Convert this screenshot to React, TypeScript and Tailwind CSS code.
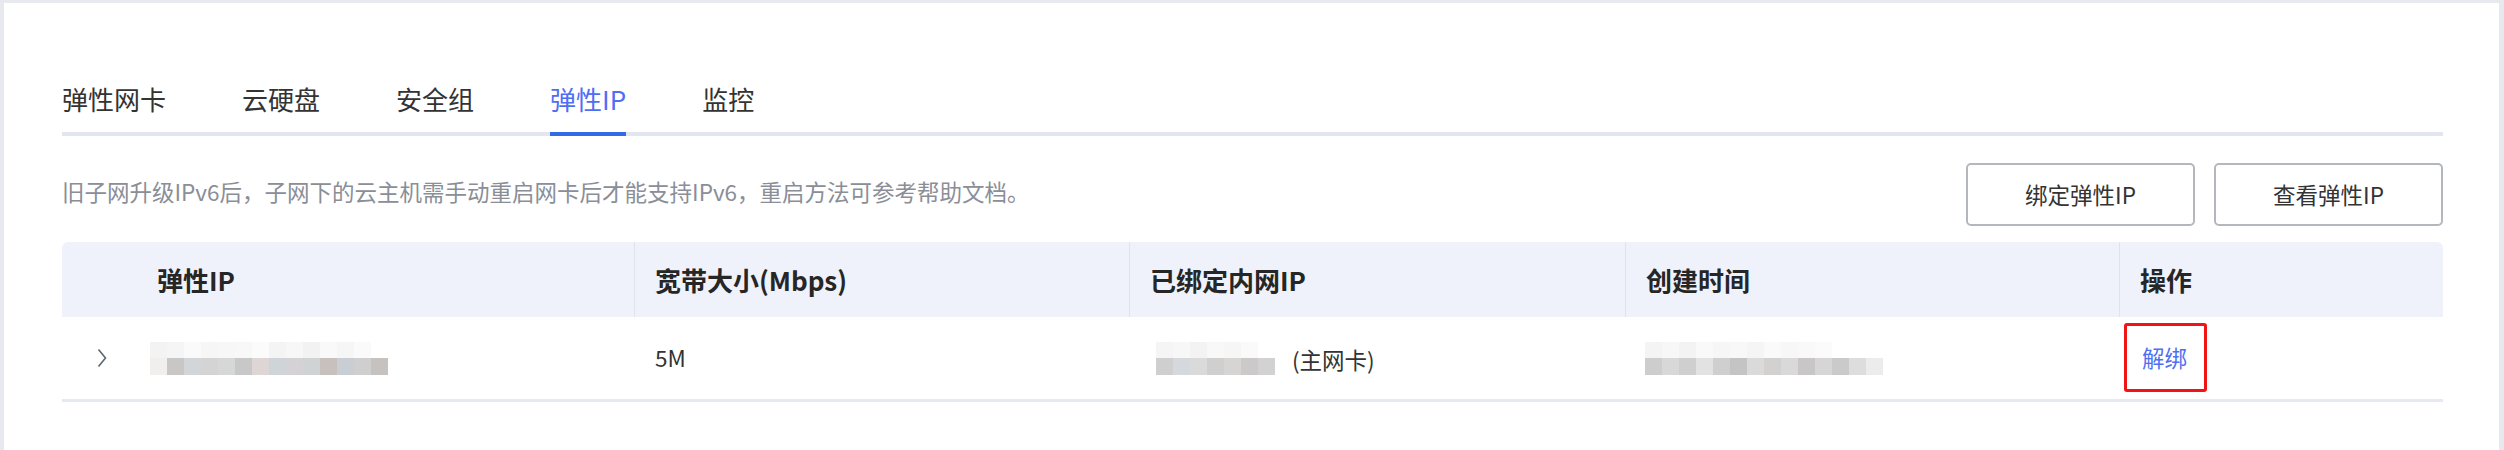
const tabs = ['弹性网卡', '云硬盘', '安全组', '弹性IP', '监控']

const ipTop = ['#f3f3f3', '#f5f5f5', '#fafafa', '#f6f6f6', '#f7f7f7', '#f8f8f8', '#fbfbfb', '#f4f4f4', '#f7f7f7', '#f2f2f2', '#f9f9f9', '#f6f6f6', '#fafafa', '#ffffff']
const ipBottom = ['#f0efee', '#c9c7c5', '#d3d6d8', '#d4d4d4', '#d6d8d8', '#c8c8c8', '#ddd6d4', '#cfd4d9', '#d4d2d4', '#cfd3d3', '#c8c0bc', '#c9cdd4', '#d0cfcf', '#c6c2bf']
const innerTop = ['#f5f5f5', '#f7f7f7', '#f3f3f3', '#f8f8f8', '#f6f6f6', '#fafafa', '#ffffff']
const innerBottom = ['#cfcfd0', '#d5d8dc', '#dadada', '#cfcfcf', '#d7d4d4', '#cbc9ca', '#d2d2d2']
const timeTop = ['#f4f4f4', '#f7f7f7', '#f3f3f3', '#f9f9f9', '#f6f6f6', '#f8f8f8', '#f5f5f5', '#fafafa', '#f7f7f7', '#f9f9f9', '#fbfbfb', '#ffffff', '#ffffff', '#ffffff']
const timeBottom = ['#cdcdcd', '#d8d8d8', '#d0cfcf', '#e2e2e2', '#cfcfcf', '#c4c4c4', '#dadada', '#d3d0d0', '#d9d9d9', '#c8c6c7', '#d6d6d6', '#cacaca', '#dddddd', '#ececec']

// blurred value, drawn as a two-row mosaic
function Mosaic({ top, bottom }: { top: string[]; bottom: string[] }) {
  return (
    <div className="flex flex-col">
      <div className="flex h-[16px]">
        {top.map((c, i) => (
          <div key={i} className="w-[17px] h-full" style={{ backgroundColor: c }} />
        ))}
      </div>
      <div className="flex h-[17px]">
        {bottom.map((c, i) => (
          <div key={i} className="w-[17px] h-full" style={{ backgroundColor: c }} />
        ))}
      </div>
    </div>
  )
}

export default function App() {
  return (
    <div
      className="w-[2504px] h-[450px] bg-[#e8e9ee] pt-[3px] pl-[4px] pr-[5px] overflow-hidden"
      style={{ fontFamily: '"Noto Sans CJK SC", "Noto Sans", sans-serif' }}
    >
      <div className="bg-white h-full pl-[58px] pr-[56px] pt-[78px]">
        {/* tabs */}
        <div className="flex gap-[76px] border-b-4 border-[#e3e6ee]">
          {tabs.map((t) => {
            const active = t === '弹性IP'
            return (
              <div
                key={t}
                className={
                  active
                    ? 'text-[26px] leading-[36px] pb-[15px] -mb-[4px] border-b-4 border-[#346ae8] text-[#4f6ef4]'
                    : 'text-[26px] leading-[36px] pb-[15px] text-[#333333]'
                }
              >
                {t}
              </div>
            )
          })}
        </div>

        {/* notice + actions */}
        <div className="flex items-center justify-between mt-[27px]">
          <p className="text-[22.5px] text-[#8a8e97] pb-[6px]">
            旧子网升级IPv6后，子网下的云主机需手动重启网卡后才能支持IPv6，重启方法可参考帮助文档。
          </p>
          <div className="flex gap-[19px]">
            <button className="w-[229px] h-[63px] border-2 border-[#b4b7bc] rounded-[5px] text-[22.5px] text-[#333333] bg-white">
              绑定弹性IP
            </button>
            <button className="w-[229px] h-[63px] border-2 border-[#b4b7bc] rounded-[5px] text-[22.5px] text-[#333333] bg-white">
              查看弹性IP
            </button>
          </div>
        </div>

        {/* table */}
        <div className="mt-[16px]">
          <div className="grid grid-cols-[75px_497px_495px_496px_494px_324px] h-[75px] bg-[#eff2fb] rounded-t-[6px] text-[26px] font-bold text-[#262626]">
            <div />
            <div className="flex items-center px-[20px]">弹性IP</div>
            <div className="flex items-center px-[20px] border-l border-[#dfe3ec]">宽带大小(Mbps)</div>
            <div className="flex items-center px-[20px] border-l border-[#dfe3ec]">已绑定内网IP</div>
            <div className="flex items-center px-[20px] border-l border-[#dfe3ec]">创建时间</div>
            <div className="flex items-center px-[20px] border-l border-[#dfe3ec]">操作</div>
          </div>
          <div className="grid grid-cols-[75px_497px_495px_496px_494px_324px] h-[85px] border-b-[3px] border-[#e6e9f1] text-[22.5px] text-[#333333]">
            <div className="flex items-center justify-center pl-[4px]">
              <svg width="10" height="20" viewBox="0 0 10 20" fill="none">
                <polyline points="1.5,1.5 8.5,10 1.5,18.5" stroke="#5f6570" strokeWidth="1.6" />
              </svg>
            </div>
            <div className="flex items-center pl-[13px]">
              <Mosaic top={ipTop} bottom={ipBottom} />
            </div>
            <div className="flex items-center px-[21px]">5M</div>
            <div className="flex items-center pl-[27px] gap-[17px]">
              <Mosaic top={innerTop} bottom={innerBottom} />
              <span className="pt-[4px]">(主网卡)</span>
            </div>
            <div className="flex items-center pl-[20px]">
              <Mosaic top={timeTop} bottom={timeBottom} />
            </div>
            <div className="flex items-center pl-[23px]">
              <span className="relative text-[#4f6ff2]">
                解绑
                <span className="absolute -left-[18px] -right-[20px] -top-[18px] -bottom-[17px] border-[3px] border-[#f01414] rounded-[3px]" />
              </span>
            </div>
          </div>
        </div>
      </div>
    </div>
  )
}
